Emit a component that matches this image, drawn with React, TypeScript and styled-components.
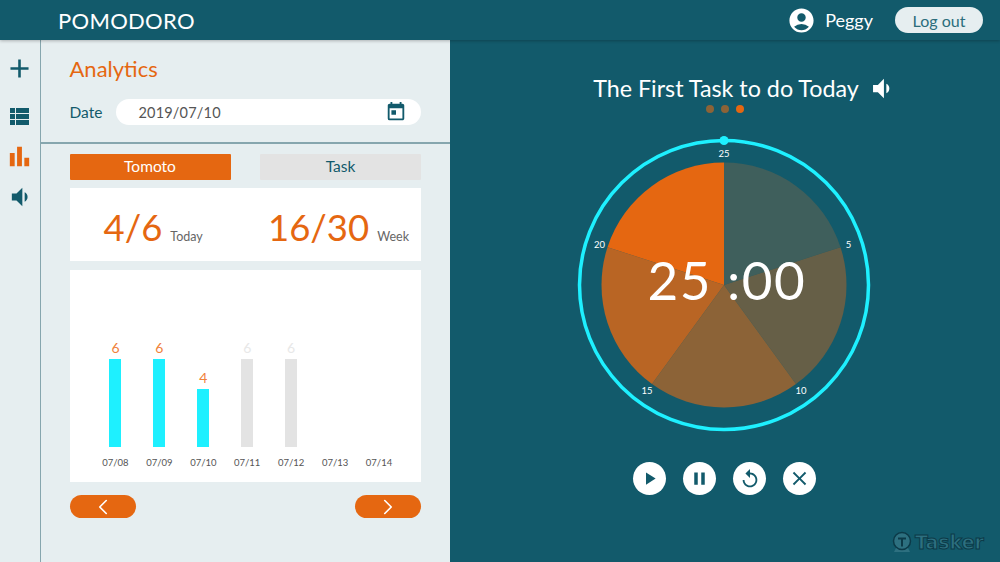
import { createGlobalStyle } from "styled-components";
import styled from "styled-components";
import {
  MdAccountCircle,
  MdAdd,
  MdBarChart,
  MdClose,
  MdPause,
  MdPlayArrow,
  MdReplay,
  MdToday,
  MdVolumeDown,
} from "react-icons/md";
import { FiChevronLeft, FiChevronRight } from "react-icons/fi";

const TEAL = "#125a6b";
const ORANGE = "#e56711";
const CYAN = "#1ef0ff";
const FONT = `"Lato", "Open Sans", sans-serif`;

const GlobalStyle = createGlobalStyle`
  html, body {
    margin: 0;
    padding: 0;
    height: 562px;
    overflow: hidden;
    font-family: ${FONT};
  }
  * { box-sizing: border-box; }
`;

const StApp = styled.div`
  width: 1000px;
  height: 562px;
  display: flex;
  flex-direction: column;
  background: ${TEAL};
`;

const StHeader = styled.header`
  height: 40px;
  flex: none;
  display: flex;
  align-items: center;
  padding: 0 17px 0 58px;
  background: ${TEAL};
  box-shadow: 0 1px 3px rgba(0, 0, 0, 0.25);
  position: relative;
  z-index: 2;
`;

const StBrand = styled.h1`
  margin: 0;
  flex: 1;
  font-size: 22px;
  font-weight: 400;
  letter-spacing: 0.3px;
  color: #fff;
`;

const StUserName = styled.span`
  margin: 0 22px 0 9px;
  font-size: 18px;
  color: #fff;
`;

const StLogout = styled.button`
  width: 88px;
  height: 26px;
  padding: 0;
  border: none;
  border-radius: 13px;
  background: #e6eef0;
  color: #2b6d7c;
  font-family: ${FONT};
  font-size: 16px;
`;

const StBody = styled.div`
  flex: 1;
  display: flex;
  min-height: 0;
`;

const StLeft = styled.section`
  width: 450px;
  flex: none;
  display: flex;
  background: #e6eef0;
`;

const StSidebar = styled.nav`
  width: 41px;
  flex: none;
  display: flex;
  flex-direction: column;
  align-items: center;
  padding-top: 14px;
  border-right: 1px solid #86a6ae;
`;

const StNavIcon = styled.span<{ $active?: boolean; $gap: number }>`
  display: flex;
  height: 28px;
  align-items: center;
  margin-left: -1px;
  margin-bottom: ${({ $gap }) => $gap}px;
  color: ${({ $active }) => ($active ? ORANGE : TEAL)};
`;

const StMain = styled.main`
  flex: 1;
  min-width: 0;
  display: flex;
  flex-direction: column;
`;

const StFilter = styled.div`
  height: 104px;
  flex: none;
  padding: 14px 29px 0 28.5px;
  border-bottom: 2px solid #86a6ae;
`;

const StTitle = styled.h2`
  margin: 0 0 15px;
  height: 30px;
  line-height: 30px;
  font-size: 22px;
  font-weight: 400;
  color: ${ORANGE};
`;

const StDateRow = styled.div`
  display: flex;
  align-items: center;
  gap: 14px;
  color: ${TEAL};
  font-size: 15.5px;
`;

const StDateField = styled.div`
  flex: 1;
  height: 26px;
  display: flex;
  align-items: center;
  justify-content: space-between;
  padding: 0 14px 0 22px;
  border-radius: 13px;
  background: #fff;
  color: #555;
  font-size: 14.5px;
  letter-spacing: 0.2px;
`;

const StContent = styled.div`
  flex: 1;
  display: flex;
  flex-direction: column;
  padding: 10px 29px 0 28.5px;
`;

const StTabs = styled.div`
  display: flex;
  justify-content: space-between;
  margin-bottom: 8px;
`;

const StTab = styled.button<{ $active?: boolean }>`
  width: 161px;
  height: 26px;
  padding: 0 0 2px;
  border: none;
  border-radius: 1px;
  background: ${({ $active }) => ($active ? ORANGE : "#e3e3e3")};
  color: ${({ $active }) => ($active ? "#fff" : TEAL)};
  font-family: ${FONT};
  font-size: 15.5px;
`;

const StStats = styled.div`
  height: 73px;
  display: flex;
  align-items: baseline;
  justify-content: space-between;
  padding: 17px 12px 0 34px;
  margin-bottom: 9px;
  background: #fff;
`;

const StStat = styled.div`
  display: flex;
  align-items: baseline;
  gap: 8px;
`;

const StStatValue = styled.span`
  font-size: 36.5px;
  line-height: 44px;
  color: ${ORANGE};
`;

const StStatLabel = styled.span`
  font-size: 12.5px;
  color: #666;
`;

const StChart = styled.div`
  height: 212px;
  display: flex;
  align-items: flex-end;
  padding: 0 20px 13px 24px;
  margin-bottom: 13px;
  background: #fff;
`;

const StColumn = styled.div`
  width: 44px;
  display: flex;
  flex-direction: column;
  align-items: center;
`;

const StBarValue = styled.span<{ $done: boolean }>`
  font-size: 14px;
  line-height: 16px;
  margin-bottom: 3px;
  color: ${({ $done }) => ($done ? "#f0823a" : "#e8e8e8")};
`;

const StBar = styled.div<{ $done: boolean }>`
  width: 12px;
  background: ${({ $done }) => ($done ? CYAN : "#e3e3e3")};
`;

const StDay = styled.span`
  margin-top: 10px;
  font-size: 9.5px;
  line-height: 12px;
  color: #555;
`;

const StPager = styled.div`
  display: flex;
  justify-content: space-between;
`;

const StPagerButton = styled.button`
  width: 66px;
  height: 23px;
  padding: 0;
  display: flex;
  align-items: center;
  justify-content: center;
  border: none;
  border-radius: 12px;
  background: ${ORANGE};
  color: #fff;
`;

const StRight = styled.section`
  flex: 1;
  position: relative;
  display: flex;
  flex-direction: column;
  align-items: center;
  padding-top: 33px;
  padding-right: 1px;
  background: ${TEAL};
`;

const StTaskRow = styled.div`
  height: 30px;
  display: flex;
  align-items: center;
  gap: 8px;
  margin-left: 40px;
  color: #fff;
  font-size: 23.3px;
  white-space: nowrap;
`;

const StDots = styled.div`
  display: flex;
  gap: 7px;
  margin-top: 2px;
  margin-bottom: 22px;
`;

const StDot = styled.span<{ $active?: boolean }>`
  width: 8px;
  height: 8px;
  border-radius: 50%;
  background: ${({ $active }) => ($active ? ORANGE : "#8c6337")};
`;

const StClock = styled.div`
  position: relative;
  width: 300px;
  height: 300px;
  margin-right: 2px;
`;

const StClockTime = styled.div`
  position: absolute;
  left: 74px;
  top: 113px;
  font-size: 53px;
  line-height: 64px;
  letter-spacing: 1.5px;
  color: #fff;
  white-space: nowrap;
`;

const StControls = styled.div`
  display: flex;
  gap: 17px;
  margin-top: 27px;
`;

const StControl = styled.button`
  width: 33px;
  height: 33px;
  padding: 0;
  display: flex;
  align-items: center;
  justify-content: center;
  border: none;
  border-radius: 50%;
  background: #fff;
  color: ${TEAL};
`;

const StWatermark = styled.div`
  position: absolute;
  right: 16px;
  bottom: 9px;
  display: flex;
  align-items: center;
  gap: 2px;
  color: #2d7080;
  font-family: "DejaVu Sans", sans-serif;
  font-size: 19px;
  line-height: 22px;
  font-weight: 700;
  -webkit-text-stroke: 1px #0c3a48;
`;

const CX = 150;
const CY = 150;
const PIE_R = 122.5;

const polar = (r: number, deg: number) => {
  const rad = ((deg - 90) * Math.PI) / 180;
  return [CX + r * Math.cos(rad), CY + r * Math.sin(rad)];
};

const wedges = ["#3f5f5c", "#665f47", "#8c6337", "#b96524", ORANGE];
const marks = [
  { label: "25", deg: 0 },
  { label: "5", deg: 72 },
  { label: "10", deg: 144 },
  { label: "15", deg: 216 },
  { label: "20", deg: 288 },
];

const days = [
  { day: "07/08", value: 6, done: true },
  { day: "07/09", value: 6, done: true },
  { day: "07/10", value: 4, done: true },
  { day: "07/11", value: 6, done: false },
  { day: "07/12", value: 6, done: false },
  { day: "07/13" },
  { day: "07/14" },
];

const ClockFace = () => (
  <svg width="300" height="300" viewBox="0 0 300 300">
    <circle cx={CX} cy={CY} r={144.5} fill="none" stroke={CYAN} strokeWidth="3.5" />
    <circle cx={CX} cy={CY - 144.5} r="4.5" fill={CYAN} />
    {wedges.map((color, i) => {
      const [x1, y1] = polar(PIE_R, i * 72);
      const [x2, y2] = polar(PIE_R, (i + 1) * 72);
      return (
        <path
          key={color}
          d={`M${CX} ${CY} L${x1} ${y1} A${PIE_R} ${PIE_R} 0 0 1 ${x2} ${y2} Z`}
          fill={color}
        />
      );
    })}
    {marks.map(({ label, deg }) => {
      const [x, y] = polar(131, deg);
      return (
        <text
          key={label}
          x={x}
          y={y + 3}
          textAnchor="middle"
          fontSize="9.5"
          fontFamily={FONT}
          fill="#fff"
        >
          {label}
        </text>
      );
    })}
  </svg>
);

// table icon from the side bar: narrow left column, wide right column, three rows
const ListIcon = () => (
  <svg width="19" height="17" viewBox="0 0 19 17" fill="currentColor">
    {[0, 6, 12].map((y) => (
      <g key={y}>
        <rect x="0" y={y} width="5" height="5" />
        <rect x="6" y={y} width="13" height="5" />
      </g>
    ))}
  </svg>
);

const TaskerMark = () => (
  <svg width="22" height="22" viewBox="0 0 22 22">
    <path d="M3 21l2-4h12l2 4z" fill="#2d7080" />
    <circle cx="11" cy="10" r="8.5" fill="#2d7080" stroke="#0c3a48" strokeWidth="1.5" />
    <path d="M7 6.5h8v2h-3v7h-2v-7H7z" fill="#0c3a48" />
  </svg>
);

const App = () => {
  return (
    <StApp>
      <GlobalStyle />
      <StHeader>
        <StBrand>POMODORO</StBrand>
        <MdAccountCircle size={29} color="#fff" />
        <StUserName>Peggy</StUserName>
        <StLogout>Log out</StLogout>
      </StHeader>
      <StBody>
        <StLeft>
          <StSidebar>
            <StNavIcon $gap={20}>
              <MdAdd size={31} />
            </StNavIcon>
            <StNavIcon $gap={12}>
              <ListIcon />
            </StNavIcon>
            <StNavIcon $gap={13} $active>
              <MdBarChart size={29} />
            </StNavIcon>
            <StNavIcon $gap={0}>
              <MdVolumeDown size={28} />
            </StNavIcon>
          </StSidebar>
          <StMain>
            <StFilter>
              <StTitle>Analytics</StTitle>
              <StDateRow>
                <span>Date</span>
                <StDateField>
                  2019/07/10
                  <MdToday size={22} color={TEAL} />
                </StDateField>
              </StDateRow>
            </StFilter>
            <StContent>
              <StTabs>
                <StTab $active>Tomoto</StTab>
                <StTab>Task</StTab>
              </StTabs>
              <StStats>
                <StStat>
                  <StStatValue>4/6</StStatValue>
                  <StStatLabel>Today</StStatLabel>
                </StStat>
                <StStat>
                  <StStatValue>16/30</StStatValue>
                  <StStatLabel>Week</StStatLabel>
                </StStat>
              </StStats>
              <StChart>
                {days.map(({ day, value, done }) => (
                  <StColumn key={day}>
                    {value !== undefined && (
                      <>
                        <StBarValue $done={!!done}>{value}</StBarValue>
                        <StBar $done={!!done} style={{ height: value === 6 ? 88 : 58 }} />
                      </>
                    )}
                    <StDay>{day}</StDay>
                  </StColumn>
                ))}
              </StChart>
              <StPager>
                <StPagerButton aria-label="previous">
                  <FiChevronLeft size={26} strokeWidth={1.5} />
                </StPagerButton>
                <StPagerButton aria-label="next">
                  <FiChevronRight size={26} strokeWidth={1.5} />
                </StPagerButton>
              </StPager>
            </StContent>
          </StMain>
        </StLeft>
        <StRight>
          <StTaskRow>
            The First Task to do Today
            <MdVolumeDown size={29} />
          </StTaskRow>
          <StDots>
            <StDot />
            <StDot />
            <StDot $active />
          </StDots>
          <StClock>
            <ClockFace />
            <StClockTime>25 :00</StClockTime>
          </StClock>
          <StControls>
            <StControl aria-label="play">
              <MdPlayArrow size={21} />
            </StControl>
            <StControl aria-label="pause">
              <MdPause size={21} />
            </StControl>
            <StControl aria-label="restart">
              <MdReplay size={22} />
            </StControl>
            <StControl aria-label="stop">
              <MdClose size={23} />
            </StControl>
          </StControls>
          <StWatermark>
            <TaskerMark />
            Tasker
          </StWatermark>
        </StRight>
      </StBody>
    </StApp>
  );
};

export default App;
